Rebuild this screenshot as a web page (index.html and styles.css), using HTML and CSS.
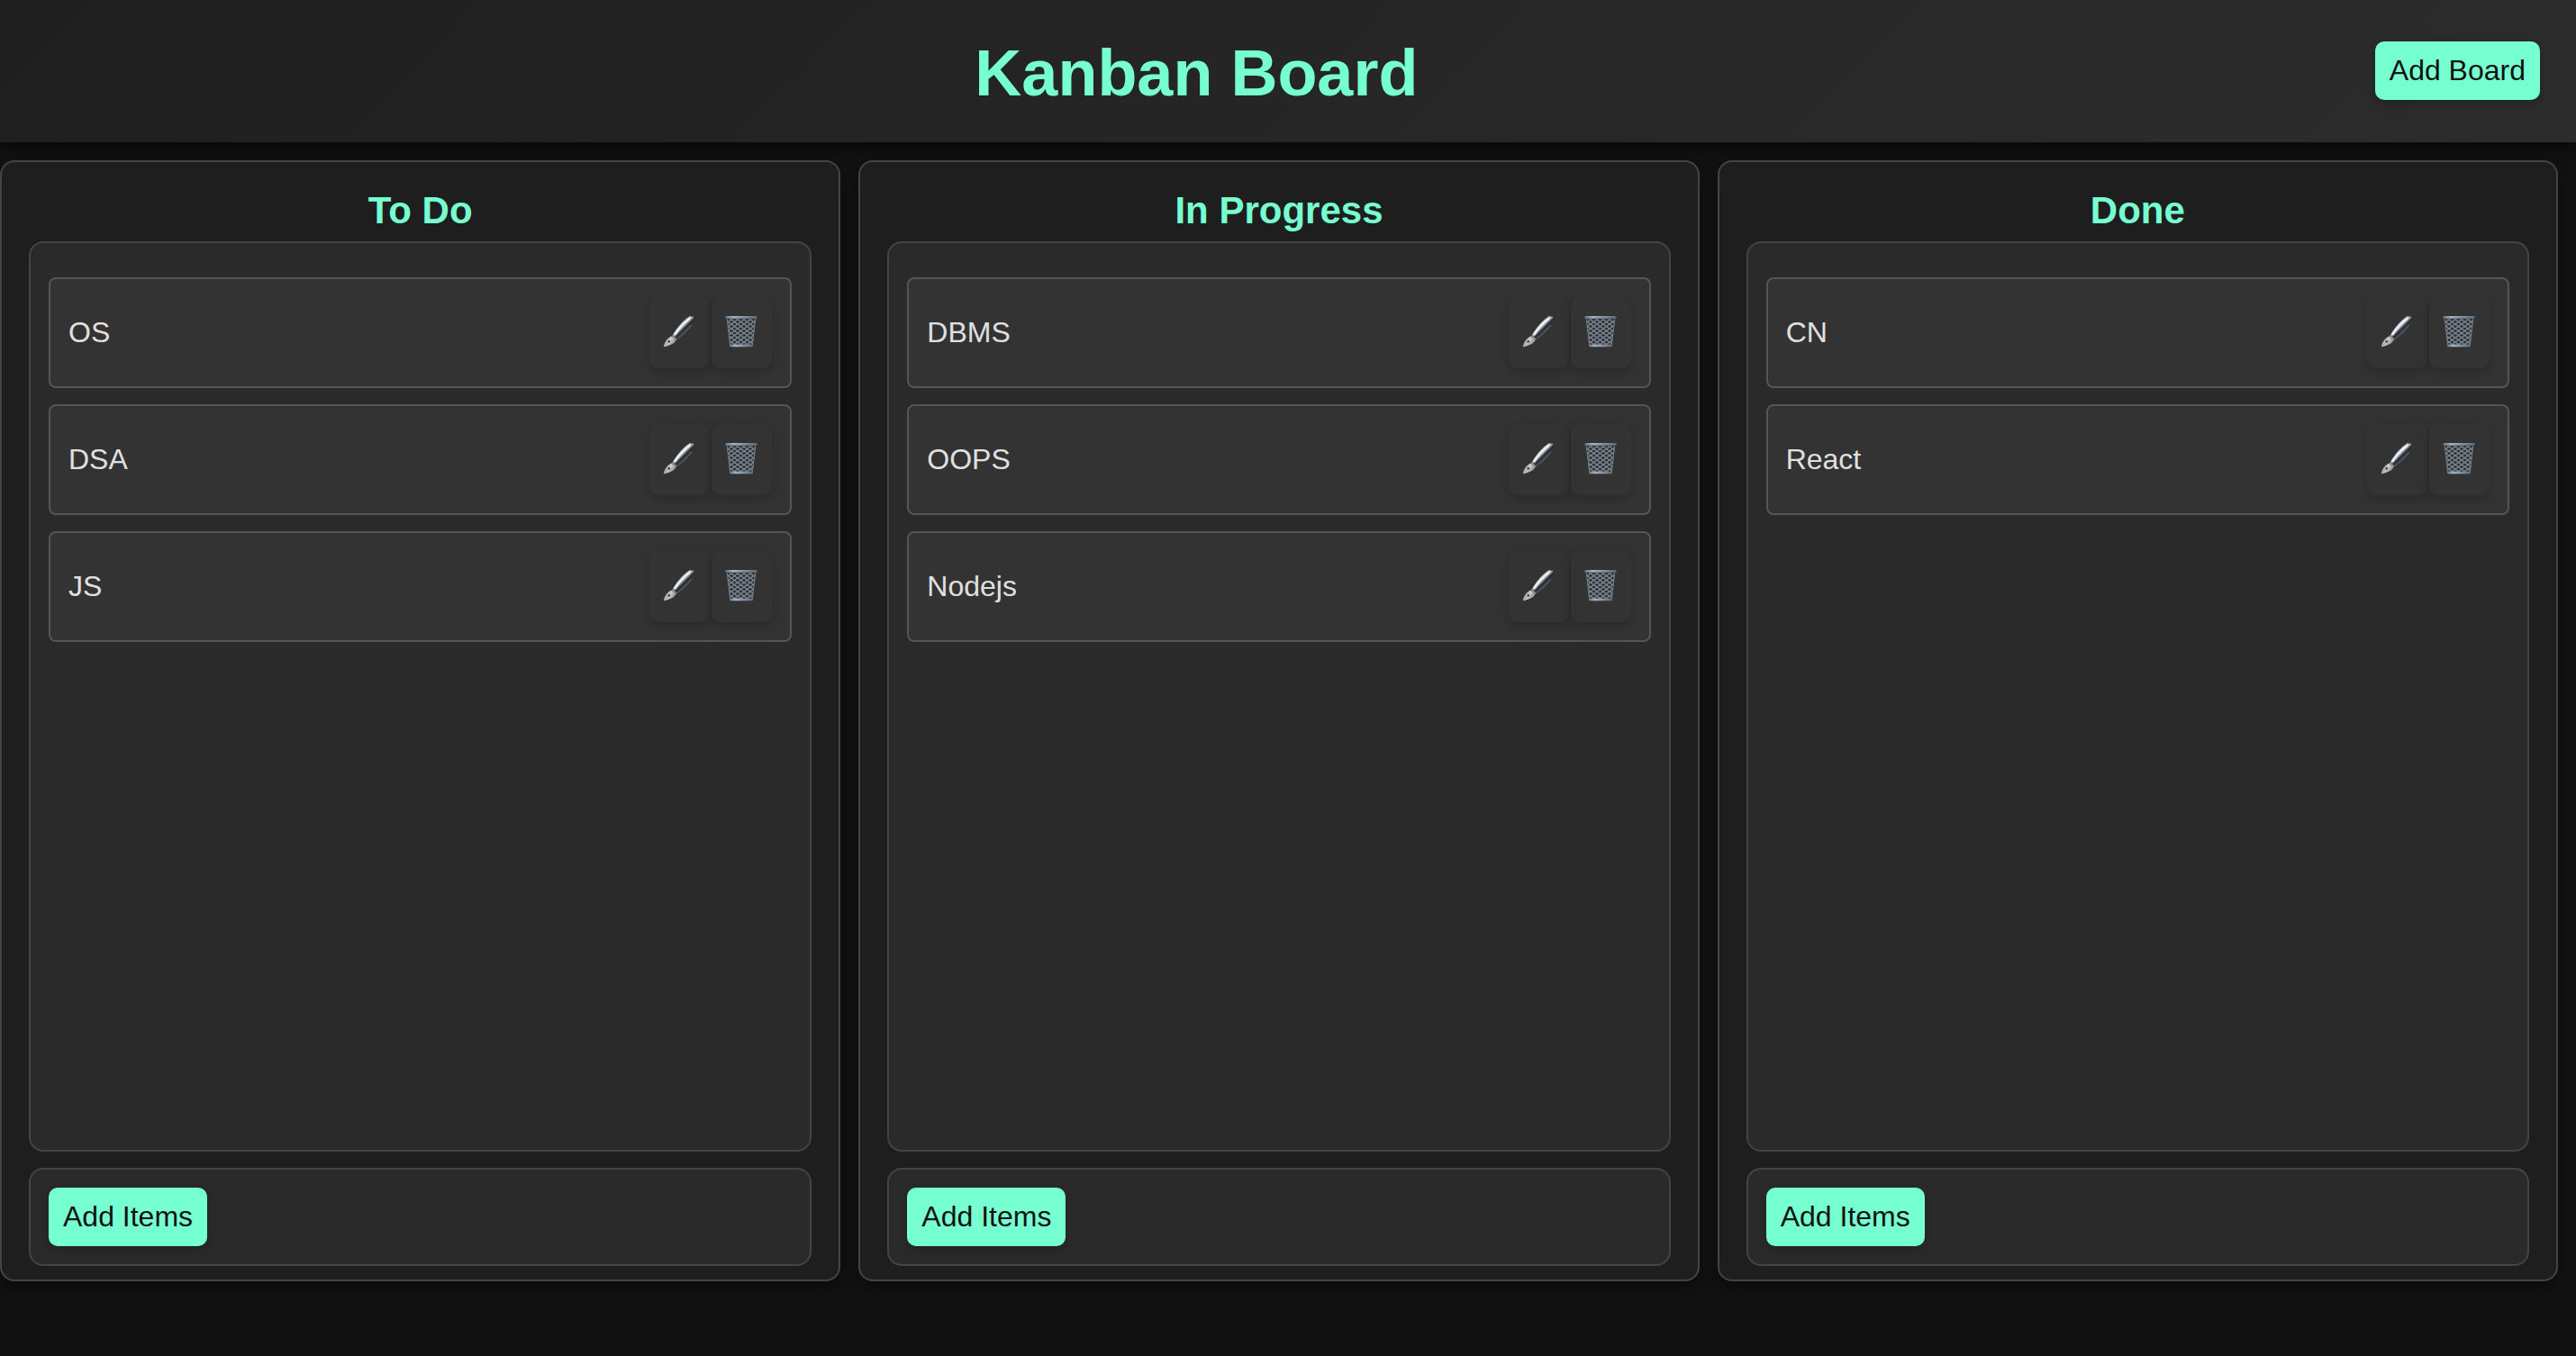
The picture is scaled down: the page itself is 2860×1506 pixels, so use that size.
FILE: index.html
```html
<!DOCTYPE html>
<html lang="en">
<head>
<meta charset="utf-8">
<meta name="viewport" content="width=device-width, initial-scale=1">
<title>Kanban Board</title>
<link rel="stylesheet" href="styles.css">
</head>
<body>
<svg class="sprite" width="0" height="0" aria-hidden="true">
  <defs>
    <linearGradient id="barrel" gradientUnits="userSpaceOnUse" x1="19" y1="11" x2="26" y2="18">
      <stop offset="0" stop-color="#8a8f95"/>
      <stop offset=".25" stop-color="#d5dade"/>
      <stop offset=".45" stop-color="#7b828a"/>
      <stop offset=".62" stop-color="#22282d"/>
      <stop offset="1" stop-color="#4a525a"/>
    </linearGradient>
    <linearGradient id="nib" gradientUnits="userSpaceOnUse" x1="3" y1="26" x2="12" y2="33">
      <stop offset="0" stop-color="#77797b"/>
      <stop offset=".4" stop-color="#cfcfcd"/>
      <stop offset="1" stop-color="#968b7e"/>
    </linearGradient>
    <linearGradient id="rim" x1="0" y1="0" x2="1" y2="0">
      <stop offset="0" stop-color="#66717d"/>
      <stop offset=".25" stop-color="#a4b3c3"/>
      <stop offset=".6" stop-color="#8291a2"/>
      <stop offset="1" stop-color="#5e6873"/>
    </linearGradient>
    <pattern id="mesh" width="7" height="5" patternUnits="userSpaceOnUse">
      <rect width="7" height="5" fill="#2d3135"/>
      <path d="M0 0L7 5M7 0L0 5" stroke="#7f8892" stroke-width="1.300" fill="none"/>
    </pattern>
    <symbol id="icon-pen" viewBox="0 0 36 36">
      <path d="M11 22.200C15 14.500 21.500 6 29.500 1.200C32 0 35 .2 35.500 1.500C36.200 4 34.800 7.500 32 11.500C27.500 17.500 21.500 22.800 15.700 26.700Z" fill="url(#barrel)"/>
      <path d="M13 21.800C17.500 14.800 23.500 8 30 3.400" stroke="#eceff1" stroke-width="2.600" fill="none"/>
      <path d="M31 1.300C33.500 .3 35.500 1 35.300 3C35 5.500 33 8 31 10.500" stroke="#2a3036" stroke-width="1.500" fill="none"/>
      <path d="M15.700 26.500C22 22 28.500 16 32 11" stroke="#626a72" stroke-width=".8" fill="none"/>
      <path d="M10.800 22.200L15.700 26.700L14.300 28L9.500 23.500Z" fill="#8d9296"/>
      <path d="M9.300 23.600L14.400 28.100C13 31 9 33.800 1.200 35.200L.8 34.600C2.200 29.500 4.500 25.700 9.300 23.600Z" fill="url(#nib)"/>
      <path d="M1 35L6.500 29.500" stroke="#77716a" stroke-width=".6"/>
      <circle cx="6.800" cy="29.300" r="1.200" fill="#3a3632"/>
    </symbol>
    <symbol id="icon-bin" viewBox="0 0 36 36">
      <path d="M2 3H34L30.500 34.500H5.500Z" fill="url(#mesh)"/>
      <path d="M2.200 3L5.700 34M33.800 3L30.300 34" stroke="#737f8b" stroke-width="1" fill="none"/>
      <rect x=".3" y="1" width="35.400" height="2.800" rx="1.400" fill="url(#rim)"/>
      <path d="M1.500 4.100H34.500" stroke="#3d444b" stroke-width=".7"/>
      <rect x="5" y="32.600" width="26" height="2.600" rx="1" fill="url(#rim)"/>
    </symbol>
  </defs>
</svg>

<header class="header">
  <h1 class="header-title">Kanban Board</h1>
  <button class="button header-button" type="button">Add Board</button>
</header>

<main class="board">
  <section class="column">
    <h2 class="column-title">To Do</h2>
    <ul class="list">
      <li class="item"><span class="item-name">OS</span><button class="icon-button" type="button" aria-label="Edit OS"><svg class="icon"><use href="#icon-pen"/></svg></button><button class="icon-button" type="button" aria-label="Delete OS"><svg class="icon"><use href="#icon-bin"/></svg></button></li>
      <li class="item"><span class="item-name">DSA</span><button class="icon-button" type="button" aria-label="Edit DSA"><svg class="icon"><use href="#icon-pen"/></svg></button><button class="icon-button" type="button" aria-label="Delete DSA"><svg class="icon"><use href="#icon-bin"/></svg></button></li>
      <li class="item"><span class="item-name">JS</span><button class="icon-button" type="button" aria-label="Edit JS"><svg class="icon"><use href="#icon-pen"/></svg></button><button class="icon-button" type="button" aria-label="Delete JS"><svg class="icon"><use href="#icon-bin"/></svg></button></li>
    </ul>
    <div class="column-footer"><button class="button" type="button">Add Items</button></div>
  </section>

  <section class="column">
    <h2 class="column-title">In Progress</h2>
    <ul class="list">
      <li class="item"><span class="item-name">DBMS</span><button class="icon-button" type="button" aria-label="Edit DBMS"><svg class="icon"><use href="#icon-pen"/></svg></button><button class="icon-button" type="button" aria-label="Delete DBMS"><svg class="icon"><use href="#icon-bin"/></svg></button></li>
      <li class="item"><span class="item-name">OOPS</span><button class="icon-button" type="button" aria-label="Edit OOPS"><svg class="icon"><use href="#icon-pen"/></svg></button><button class="icon-button" type="button" aria-label="Delete OOPS"><svg class="icon"><use href="#icon-bin"/></svg></button></li>
      <li class="item"><span class="item-name">Nodejs</span><button class="icon-button" type="button" aria-label="Edit Nodejs"><svg class="icon"><use href="#icon-pen"/></svg></button><button class="icon-button" type="button" aria-label="Delete Nodejs"><svg class="icon"><use href="#icon-bin"/></svg></button></li>
    </ul>
    <div class="column-footer"><button class="button" type="button">Add Items</button></div>
  </section>

  <section class="column">
    <h2 class="column-title">Done</h2>
    <ul class="list">
      <li class="item"><span class="item-name">CN</span><button class="icon-button" type="button" aria-label="Edit CN"><svg class="icon"><use href="#icon-pen"/></svg></button><button class="icon-button" type="button" aria-label="Delete CN"><svg class="icon"><use href="#icon-bin"/></svg></button></li>
      <li class="item"><span class="item-name">React</span><button class="icon-button" type="button" aria-label="Edit React"><svg class="icon"><use href="#icon-pen"/></svg></button><button class="icon-button" type="button" aria-label="Delete React"><svg class="icon"><use href="#icon-bin"/></svg></button></li>
    </ul>
    <div class="column-footer"><button class="button" type="button">Add Items</button></div>
  </section>
</main>
</body>
</html>
```

FILE: styles.css
```css
* {
  box-sizing: border-box;
  margin: 0;
  padding: 0;
}

body {
  display: flex;
  flex-direction: column;
  min-height: 100vh;
  background: #121212;
  color: #e0e0e0;
  font-family: "Liberation Sans", Arial, Helvetica, sans-serif;
  font-size: 32px;
  line-height: 37px;
}

.sprite {
  position: absolute;
}

.header {
  display: flex;
  align-items: center;
  padding: 34px 20px 36px;
  background: linear-gradient(135deg, #1f1f1f, #2c2c2c);
  box-shadow: 0 8px 16px rgba(0, 0, 0, 0.5);
}

.header-title {
  flex: 1;
  padding-top: 6px;
  color: #76ffd1;
  font-size: 72px;
  line-height: 82px;
  text-align: center;
}

.button {
  padding: 14px 16px;
  border: 0;
  border-radius: 10px;
  background: #76ffd1;
  box-shadow: 0 4px 12px rgba(0, 0, 0, 0.2);
  color: #121212;
  font: inherit;
  cursor: pointer;
}

.header-button {
  margin-right: 20px;
}

.board {
  display: flex;
  flex: 1;
  gap: 20px;
  padding: 20px 20px 83px 0;
}

.column {
  display: flex;
  flex: 1;
  flex-direction: column;
  min-width: 0;
  padding: 30px 30px 15px;
  border: 2px solid #444;
  border-radius: 16px;
  background: #1e1e1e;
  box-shadow: 0 8px 16px rgba(0, 0, 0, 0.4);
}

.column-title {
  margin-bottom: 10px;
  color: #76ffd1;
  font-size: 42px;
  line-height: 48px;
  text-align: center;
}

.list {
  display: flex;
  flex: 1;
  flex-direction: column;
  gap: 18px;
  margin-bottom: 18px;
  padding: 38px 20px 20px;
  border: 2px solid #444;
  border-radius: 16px;
  background: #2a2a2a;
  list-style: none;
}

.item {
  display: flex;
  align-items: center;
  gap: 2px;
  padding: 20px;
  border: 2px solid #555;
  border-radius: 8px;
  background: #333;
}

.item-name {
  flex: 1;
}

.icon-button {
  display: flex;
  padding: 20px 16px 23px 15px;
  border: 0;
  border-radius: 10px;
  background: #333;
  box-shadow: 0 4px 12px rgba(0, 0, 0, 0.2);
  cursor: pointer;
}

.icon {
  width: 36px;
  height: 36px;
}

.column-footer {
  padding: 20px;
  border: 2px solid #444;
  border-radius: 16px;
  background: #2a2a2a;
}
```
